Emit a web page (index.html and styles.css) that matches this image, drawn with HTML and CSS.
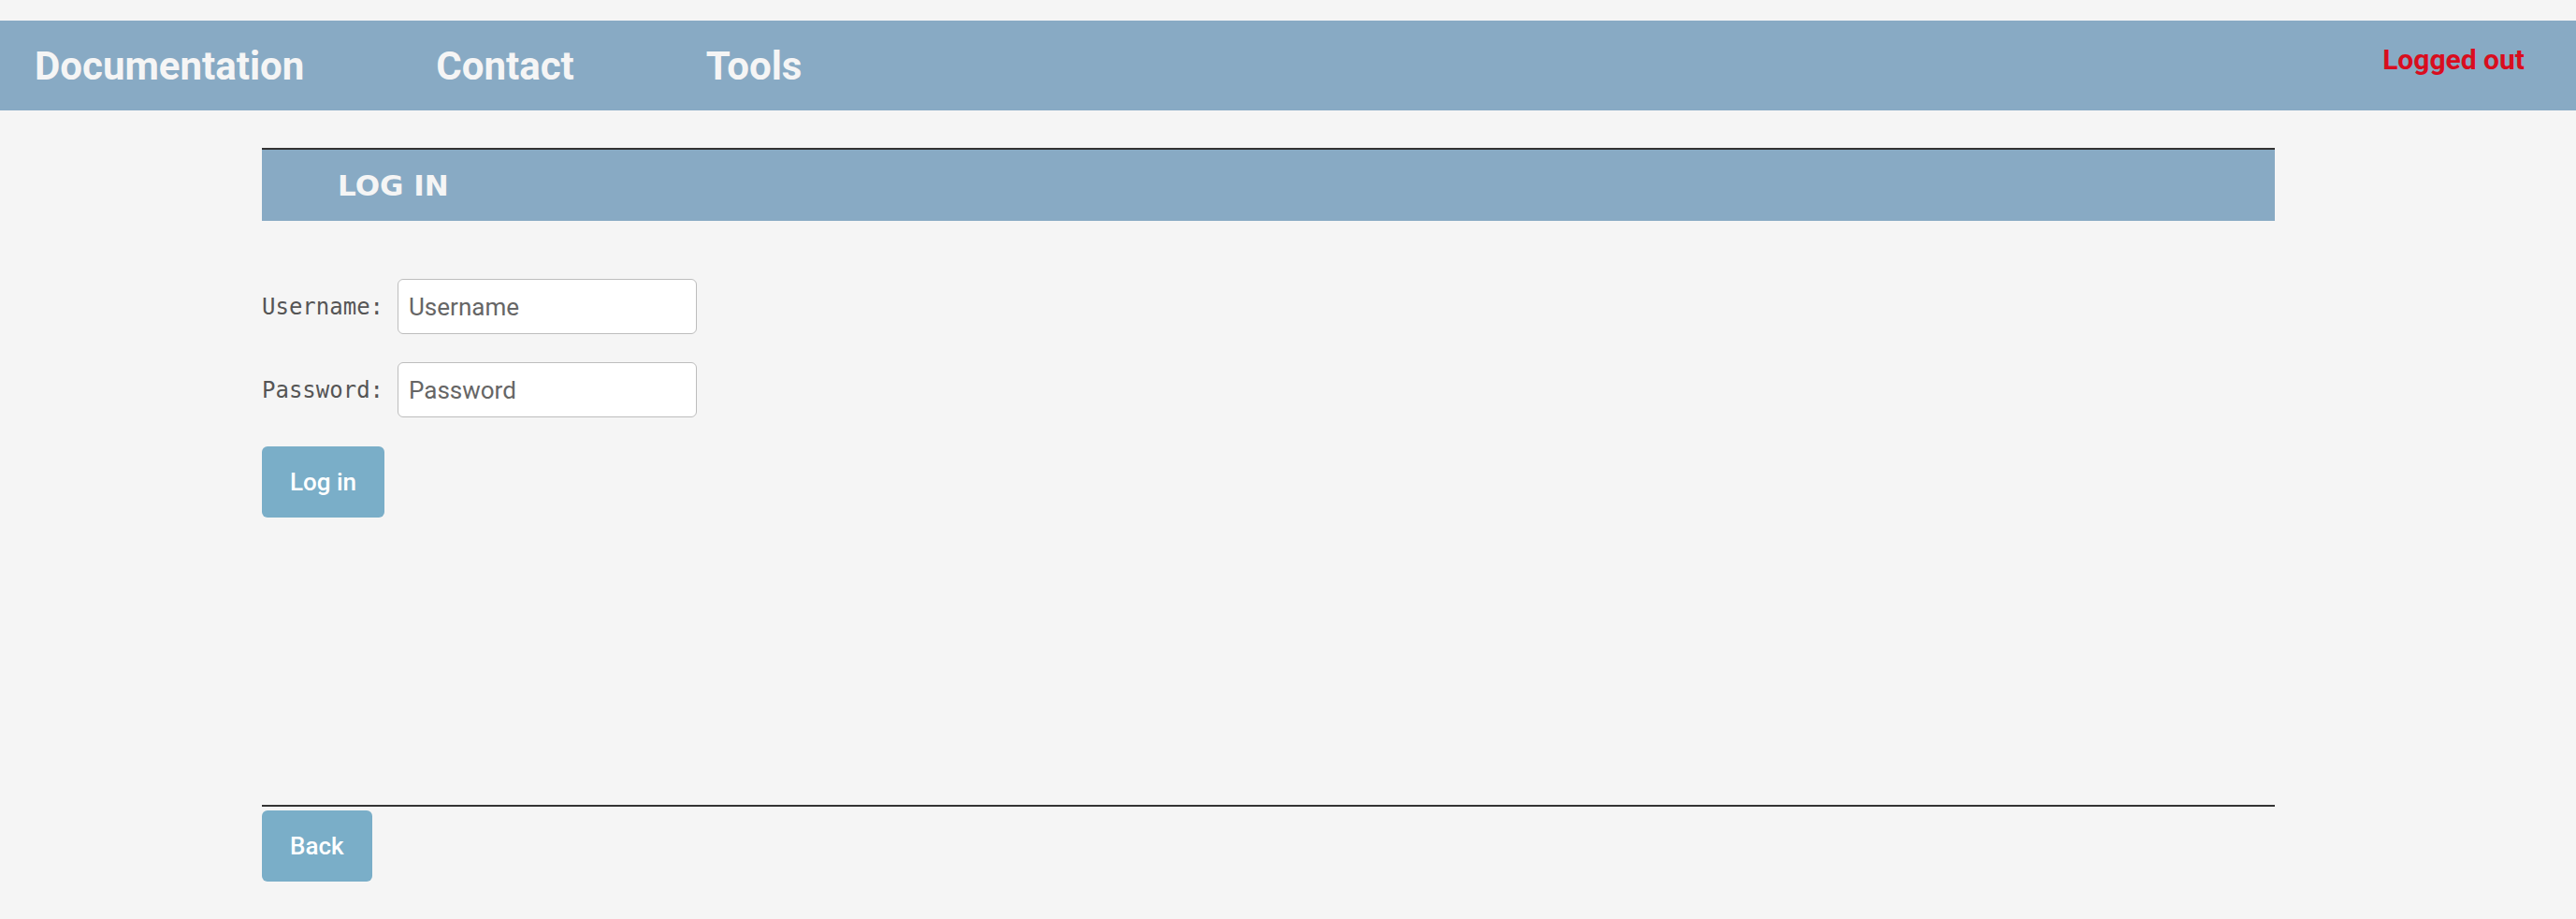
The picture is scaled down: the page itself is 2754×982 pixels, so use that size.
FILE: index.html
```html
<!DOCTYPE html>
<html lang="en">
<head>
<meta charset="UTF-8">
<meta name="viewport" content="width=device-width, initial-scale=1.0">
<title>Log in</title>
<link rel="stylesheet" href="styles.css">
</head>
<body>
<div class="topnav">
<a href="#">Documentation</a>
<a href="#">Contact</a>
<a href="#">Tools</a>
<span class="status">Logged out</span>
</div>

<div class="content">
<div class="section-title">LOG IN</div>

<form class="login-form" onsubmit="return false;">
<div class="row">
<label for="username">Username:</label>
<input type="text" id="username" placeholder="Username">
</div>
<div class="row">
<label for="password">Password:</label>
<input type="password" id="password" placeholder="Password">
</div>
<button class="btn" type="submit">Log in</button>
</form>

<div class="bottom">
<button class="btn" type="button">Back</button>
</div>
</div>
</body>
</html>
```

FILE: styles.css
```css
body { margin: 0; padding-top: 22px; background: #f5f5f5; font-family: Roboto, Arial, sans-serif; }

.topnav { display: flex; align-items: center; gap: 141px; height: 96px; padding-left: 37px; background: #88aac4; }
.topnav a { color: #f5f5f5; text-decoration: none; font-weight: 700; font-size: 42px; line-height: 49px; }
.topnav .status { margin-left: auto; margin-right: 55px; align-self: flex-start; margin-top: 24px; color: #d90d1e; font-weight: 700; font-size: 30px; line-height: 35px; }

.content { width: 2152px; margin: 40px 0 0 280px; }

.section-title { display: flex; align-items: center; height: 76px; padding-left: 81px; border-top: 2px solid #333; background: #88aac4; color: #f5f5f5; font-family: "DejaVu Sans", Verdana, sans-serif; font-weight: 700; font-size: 31px; }

.login-form { padding-top: 62px; }
.row { display: flex; align-items: center; margin-bottom: 30px; }
.row label { width: 130px; margin-right: 15px; color: #555; font-family: "DejaVu Sans Mono", monospace; font-size: 24px; }
.row input { box-sizing: border-box; width: 320px; height: 59px; padding: 0 11px; border: 1px solid #bdbdbd; border-radius: 6px; background: #fff; color: #333; font-family: Roboto, Arial, sans-serif; font-size: 26px; outline: none; }
.row input::placeholder { color: #666; }

.btn { height: 76px; padding: 0 30px; margin-top: 1px; border: none; border-radius: 6px; background: #7aaec8; color: #fff; font-family: Roboto, Arial, sans-serif; font-weight: 500; font-size: 26px; cursor: pointer; }

.bottom { margin-top: 307px; padding-top: 4px; border-top: 2px solid #333; }
.bottom .btn { margin-top: 0; }
```
